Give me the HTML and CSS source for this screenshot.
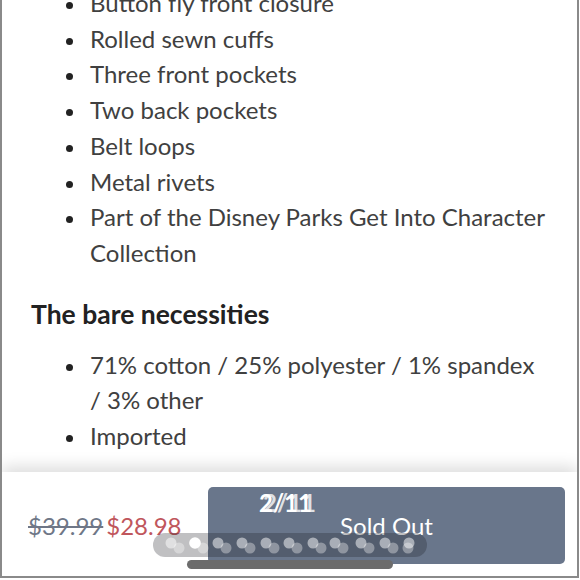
FILE: index.html
```html
<!DOCTYPE html>
<html>
<head>
<meta charset="utf-8">
<link rel="stylesheet" href="styles.css">
</head>
<body>
<div class="frame">
  <main class="content">
    <ul class="list first">
      <li>Button fly front closure</li>
      <li>Rolled sewn cuffs</li>
      <li>Three front pockets</li>
      <li>Two back pockets</li>
      <li>Belt loops</li>
      <li>Metal rivets</li>
      <li>Part of the Disney Parks Get Into Character Collection</li>
    </ul>
    <h2 class="heading">The bare necessities</h2>
    <ul class="list">
      <li>71% cotton / 25% polyester / 1% spandex / 3% other</li>
      <li>Imported</li>
    </ul>
  </main>
  <footer class="bar">
    <div class="price"><s class="old">$39.99</s><span class="sale">$28.98</span></div>
    <button class="soldout">Sold Out</button>
  </footer>
  <div class="counter">2/11</div>
  <div class="pager">
    <svg width="274" height="24" viewBox="0 0 274 24">
      <g fill="#ffffff" fill-opacity="0.35">
        <circle cx="26" cy="15" r="5.5"/><circle cx="50" cy="15" r="5.5"/><circle cx="73" cy="15" r="5.5"/>
        <circle cx="97" cy="15" r="5.5"/><circle cx="121" cy="15" r="5.5"/><circle cx="144" cy="15" r="5.5"/>
        <circle cx="168" cy="15" r="5.5"/><circle cx="190" cy="15" r="5.5"/><circle cx="216" cy="15" r="5.5"/>
        <circle cx="240" cy="15" r="5.5"/><circle cx="255" cy="15" r="5.5"/>
      </g>
      <g fill="#ffffff" fill-opacity="0.5">
        <circle cx="18" cy="10" r="5.5"/><circle cx="65" cy="10" r="5.5"/>
        <circle cx="89" cy="10" r="5.5"/><circle cx="113" cy="10" r="5.5"/><circle cx="136" cy="10" r="5.5"/>
        <circle cx="160" cy="10" r="5.5"/><circle cx="182" cy="10" r="5.5"/><circle cx="208" cy="10" r="5.5"/>
        <circle cx="232" cy="10" r="5.5"/><circle cx="256" cy="10" r="5.5"/>
      </g>
      <circle cx="42" cy="10" r="5.8" fill="#ffffff"/>
    </svg>
  </div>
  <div class="homebar"></div>
</div>
</body>
</html>
```

FILE: styles.css
```css
html, body {
  margin: 0;
  padding: 0;
  background: #ffffff;
}
body {
  font-family: Lato, "Noto Sans", sans-serif;
}
.frame {
  position: relative;
  width: 579px;
  height: 578px;
  box-sizing: border-box;
  border-left: 2px solid #8a8a8a;
  border-right: 2px solid #8a8a8a;
  border-bottom: 2px solid #8a8a8a;
  display: flex;
  flex-direction: column;
  overflow: hidden;
  background: #ffffff;
}
.content {
  flex: 1;
  overflow: hidden;
  padding: 0 30px 0 29px;
  color: #404040;
}
.list {
  list-style: none;
  margin: 0;
  padding: 0;
  font-size: 24px;
  line-height: 35.7px;
}
.list.first {
  margin-top: -15px;
}
.list li {
  display: grid;
  grid-template-columns: 59px 1fr;
}
.list li::before {
  content: "";
  width: 7px;
  height: 7px;
  border-radius: 50%;
  background: #222222;
  margin-left: 35px;
  margin-top: 17px;
}
.heading {
  margin: 28px 0 18px 0;
  font-size: 26.5px;
  line-height: 30px;
  font-weight: 700;
  color: #222222;
}
.bar {
  height: 104px;
  flex: none;
  display: flex;
  align-items: flex-start;
  justify-content: space-between;
  padding: 15px 12px 0 26px;
  box-sizing: border-box;
  background: #ffffff;
  box-shadow: 0 -6px 14px rgba(0, 0, 0, 0.13);
  position: relative;
}
.price {
  font-size: 24px;
  margin-top: 25px;
  line-height: 28px;
}
.old {
  color: #6f7787;
  text-decoration-thickness: 2px;
  margin-right: 3px;
}
.sale {
  color: #c0565c;
}
.soldout {
  width: 357px;
  height: 77px;
  border: none;
  border-radius: 5px;
  background: #69768b;
  color: #ffffff;
  font-family: Lato, "Noto Sans", sans-serif;
  font-size: 24px;
  padding: 0;
}
.counter {
  position: absolute;
  left: 257px;
  top: 489px;
  font-size: 24px;
  font-weight: 700;
  color: #ffffff;
  line-height: 28px;
  text-shadow: 4px 0 0 rgba(255, 255, 255, 0.8);
}
.pager {
  position: absolute;
  left: 151px;
  top: 533px;
  width: 274px;
  height: 24px;
  border-radius: 12px;
  background: rgba(30, 30, 36, 0.28);
  line-height: 0;
}
.homebar {
  position: absolute;
  left: 185px;
  top: 560px;
  width: 206px;
  height: 9px;
  border-radius: 5px;
  background: #6c6c6c;
}
```
